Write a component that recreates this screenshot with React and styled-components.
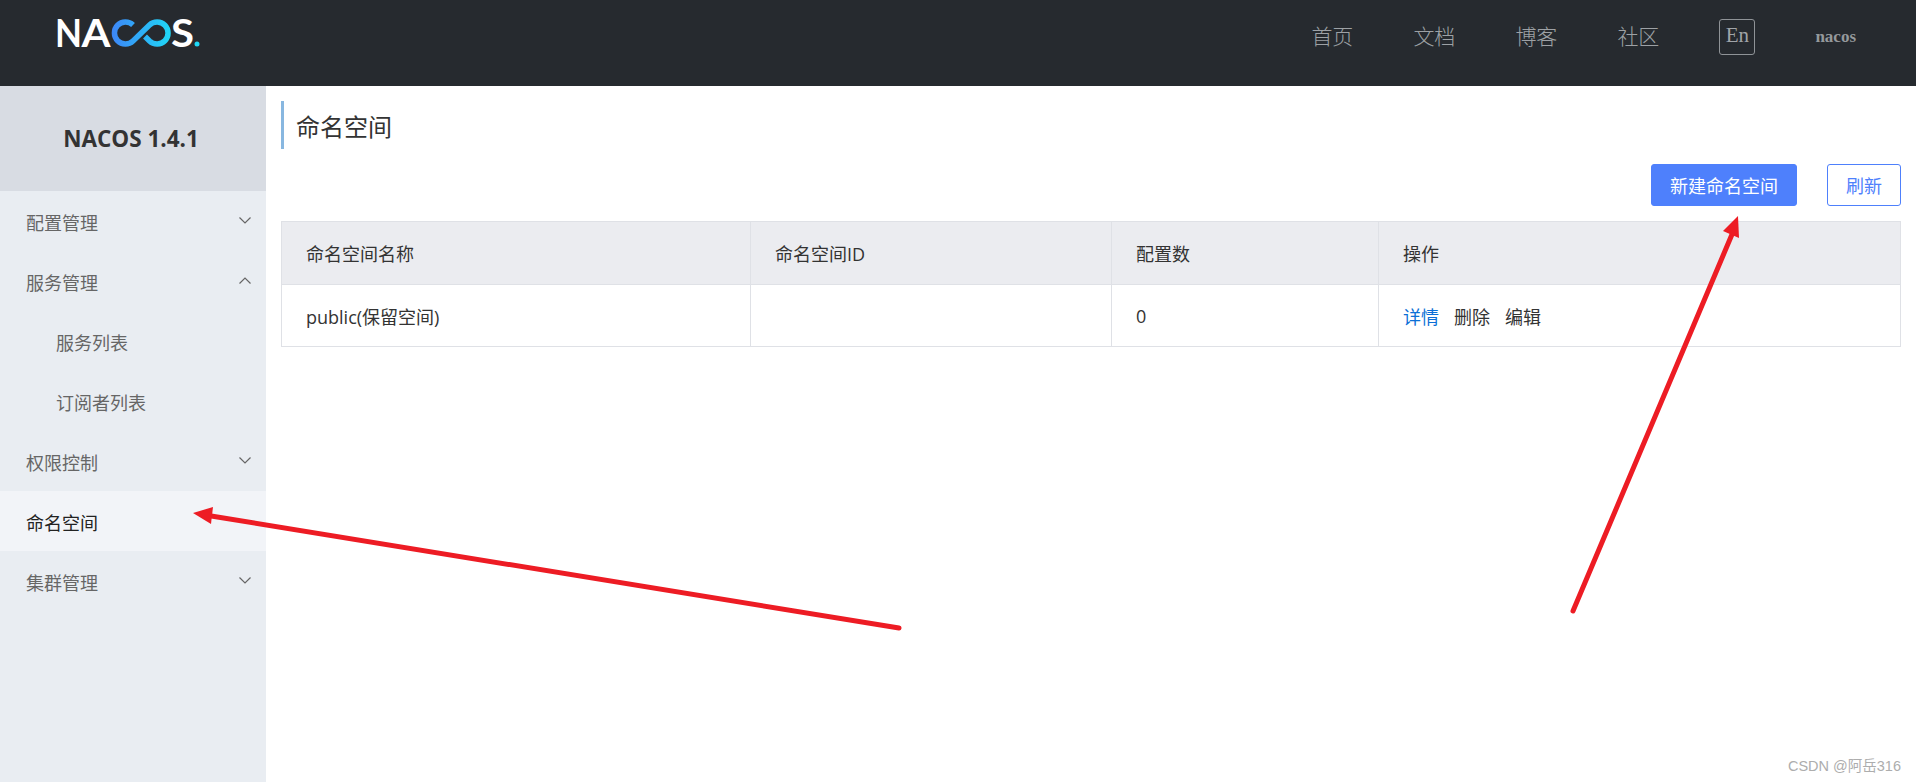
import React from "react";
import styled, { createGlobalStyle } from "styled-components";

const SANS = `"Noto Sans CJK SC", "Open Sans", sans-serif`;
const TABLE_FONT = `"Open Sans", "Noto Sans CJK SC", sans-serif`;

const GlobalStyle = createGlobalStyle`
  html, body {
    margin: 0;
    padding: 0;
    background: #fff;
    font-family: ${SANS};
  }
  * { box-sizing: border-box; }
`;

const Page = styled.div`
  position: relative;
  display: flex;
  flex-direction: column;
  height: 782px;
  overflow: hidden;
`;

/* top bar */
const Header = styled.header`
  display: flex;
  align-items: center;
  justify-content: space-between;
  flex: 0 0 86px;
  padding: 0 60px 0 56px;
  background: #262a2f;
`;

const Logo = styled.svg`
  display: block;
  width: 150px;
  height: 34px;
  margin-top: -20px;
  overflow: visible;
`;

const LogoLetter = styled.text`
  font-family: Lato, sans-serif;
  font-weight: 700;
  font-size: 38px;
  fill: #fff;
`;

const Nav = styled.nav`
  display: flex;
  align-items: center;
  gap: 60px;
  margin-top: -12px;
`;

const NavLink = styled.a`
  font-family: "Liberation Serif", "Noto Sans CJK SC", serif;
  font-size: 21px;
  font-weight: 300;
  line-height: 30px;
  color: #9da1a5;
`;

const LangBox = styled.span`
  display: flex;
  align-items: center;
  justify-content: center;
  width: 36px;
  height: 36px;
  padding-bottom: 4px;
  border: 1px solid #8f9397;
  border-radius: 3px;
  font-family: "Liberation Serif", serif;
  font-size: 21px;
  color: #a0a4a8;
`;

const UserName = styled.span`
  font-family: "Liberation Serif", serif;
  font-size: 17px;
  font-weight: 700;
  color: #95999c;
`;

/* body */
const Body = styled.div`
  display: flex;
  flex: 1;
  min-height: 0;
`;

const Sidebar = styled.aside`
  flex: 0 0 266px;
  background: #e9edf2;
`;

const Version = styled.div`
  display: flex;
  align-items: center;
  justify-content: center;
  height: 105px;
  padding-right: 4px;
  background: #d8dce3;
  font-family: "Open Sans", sans-serif;
  font-size: 22.5px;
  font-weight: 700;
  color: #333;
`;

const MenuItem = styled.div`
  display: flex;
  align-items: center;
  justify-content: space-between;
  height: 60px;
  padding: 2px 15px 0 ${(p) => (p.$sub ? 56 : 26)}px;
  background: ${(p) => (p.$active ? "#f2f4f8" : "transparent")};
  font-size: 18px;
  color: ${(p) => (p.$active ? "#222" : "#666")};
`;

const Chevron = styled.svg`
  display: block;
  width: 12px;
  height: 7px;
  margin-top: -4px;
  fill: none;
  stroke: #666;
  stroke-width: 1.2;
  transform: ${(p) => (p.$up ? "rotate(180deg)" : "none")};
`;

const Main = styled.main`
  flex: 1;
  min-width: 0;
  padding: 15px 15px 0;
`;

const PageTitle = styled.h1`
  display: flex;
  align-items: center;
  height: 48px;
  margin: 0;
  padding-left: 12px;
  border-left: 3px solid #88b7e0;
  font-size: 24px;
  font-weight: 400;
  color: #333;
`;

const Toolbar = styled.div`
  display: flex;
  justify-content: flex-end;
  gap: 30px;
  margin: 15px 0;
`;

const Button = styled.button`
  height: 42px;
  padding: 0 18px;
  border: 1px solid #4e80fc;
  border-radius: 3px;
  background: ${(p) => (p.$primary ? "#4e80fc" : "#fff")};
  font-family: ${SANS};
  font-size: 18px;
  color: ${(p) => (p.$primary ? "#fff" : "#4e80fc")};
`;

const Table = styled.table`
  width: 100%;
  table-layout: fixed;
  border-collapse: collapse;
  font-family: ${TABLE_FONT};
  font-size: 18px;
  color: #333;
`;

const Th = styled.th`
  width: ${(p) => p.$w}px;
  height: 63px;
  padding: 0 24px;
  border: 1px solid #dfe1e6;
  background: #ebecf0;
  font-weight: 400;
  text-align: left;
`;

const Td = styled.td`
  height: 62px;
  padding: 0 24px;
  border: 1px solid #dfe1e6;
`;

const Action = styled.a`
  margin-right: 15px;
  color: ${(p) => (p.$link ? "#0b6fd6" : "#333")};
`;

/* red annotation arrows drawn on top of the screenshot */
const Annotations = styled.svg`
  position: absolute;
  left: 0;
  top: 0;
  width: 1916px;
  height: 782px;
  pointer-events: none;
`;

const Watermark = styled.span`
  position: absolute;
  right: 15px;
  bottom: 7px;
  font-family: "Liberation Sans", "Noto Sans CJK SC", sans-serif;
  font-size: 14.5px;
  color: #adadad;
`;

const ArrowDown = ({ up }) => (
  <Chevron $up={up} viewBox="0 0 12 7">
    <path d="M0.5 0.5 L6 6 L11.5 0.5" />
  </Chevron>
);

const NacosLogo = () => (
  <Logo viewBox="0 0 150 34">
    <defs>
      <linearGradient id="loop" gradientUnits="userSpaceOnUse" x1="56" x2="115" y1="17" y2="17">
        <stop offset="0" stopColor="#3d86f7" />
        <stop offset="1" stopColor="#1fd8f6" />
      </linearGradient>
    </defs>
    <LogoLetter x="-1" y="31" textLength="27" lengthAdjust="spacingAndGlyphs">N</LogoLetter>
    <LogoLetter x="25.500" y="31" textLength="29" lengthAdjust="spacingAndGlyphs">A</LogoLetter>
    <path
      d="M77 9 A11 11 0 1 0 77 25 L93.500 9 A11 11 0 1 1 93.500 25 L89 20.500"
      fill="none"
      stroke="url(#loop)"
      strokeWidth="5.500"
    />
    <LogoLetter x="115" y="31" textLength="23" lengthAdjust="spacingAndGlyphs">S</LogoLetter>
    <circle cx="141" cy="28" r="2.500" fill="#1fd8f6" />
  </Logo>
);

export default function App() {
  return (
    <Page>
      <GlobalStyle />
      <Header>
        <NacosLogo />
        <Nav>
          <NavLink>首页</NavLink>
          <NavLink>文档</NavLink>
          <NavLink>博客</NavLink>
          <NavLink>社区</NavLink>
          <LangBox>En</LangBox>
          <UserName>nacos</UserName>
        </Nav>
      </Header>
      <Body>
        <Sidebar>
          <Version>NACOS 1.4.1</Version>
          <MenuItem>配置管理<ArrowDown /></MenuItem>
          <MenuItem>服务管理<ArrowDown up /></MenuItem>
          <MenuItem $sub>服务列表</MenuItem>
          <MenuItem $sub>订阅者列表</MenuItem>
          <MenuItem>权限控制<ArrowDown /></MenuItem>
          <MenuItem $active>命名空间</MenuItem>
          <MenuItem>集群管理<ArrowDown /></MenuItem>
        </Sidebar>
        <Main>
          <PageTitle>命名空间</PageTitle>
          <Toolbar>
            <Button $primary>新建命名空间</Button>
            <Button>刷新</Button>
          </Toolbar>
          <Table>
            <thead>
              <tr>
                <Th $w={469}>命名空间名称</Th>
                <Th $w={361}>命名空间ID</Th>
                <Th $w={267}>配置数</Th>
                <Th>操作</Th>
              </tr>
            </thead>
            <tbody>
              <tr>
                <Td>public(保留空间)</Td>
                <Td />
                <Td>0</Td>
                <Td>
                  <Action $link>详情</Action>
                  <Action>删除</Action>
                  <Action>编辑</Action>
                </Td>
              </tr>
            </tbody>
          </Table>
        </Main>
      </Body>
      <Annotations viewBox="0 0 1916 782">
        <path d="M899 628 L205 515" stroke="#ed1c24" strokeWidth="5" strokeLinecap="round" fill="none" />
        <polygon points="193,513 213,507 211,524" fill="#ed1c24" />
        <path d="M1573 611 L1733 232" stroke="#ed1c24" strokeWidth="5" strokeLinecap="round" fill="none" />
        <polygon points="1738,216 1739,238 1723,231" fill="#ed1c24" />
      </Annotations>
      <Watermark>CSDN @阿岳316</Watermark>
    </Page>
  );
}
